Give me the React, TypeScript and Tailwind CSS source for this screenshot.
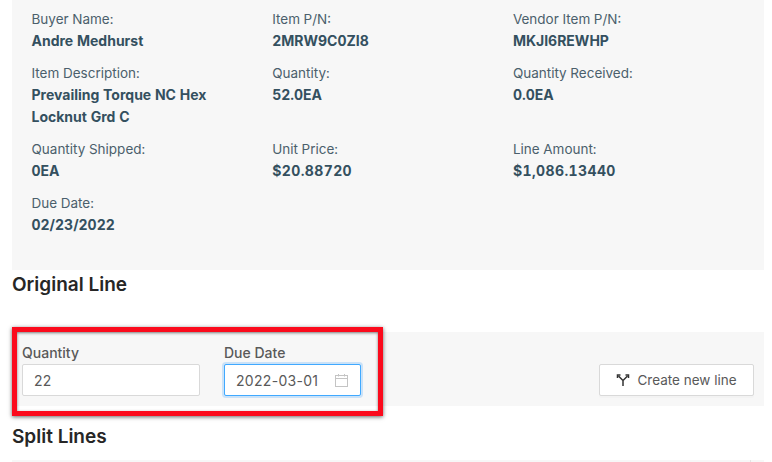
const items: [string, string[]][][] = [
  [["Buyer Name:", ["Andre Medhurst"]], ["Item P/N:", ["2MRW9C0ZI8"]], ["Vendor Item P/N:", ["MKJI6REWHP"]]],
  [["Item Description:", ["Prevailing Torque NC Hex", "Locknut Grd C"]], ["Quantity:", ["52.0EA"]], ["Quantity Received:", ["0.0EA"]]],
  [["Quantity Shipped:", ["0EA"]], ["Unit Price:", ["$20.88720"]], ["Line Amount:", ["$1,086.13440"]]],
  [["Due Date:", ["02/23/2022"]]],
];

export default function App() {
  return (
    <div className="relative h-[462px] w-[772px] overflow-hidden bg-white font-['Inter',sans-serif]">
      <div className="ml-3 mr-2 h-[270px] bg-[#f7f7f7] pl-[19.5px] pt-[8px] tabular-nums">
        <div className="flex flex-col gap-[10px]">
          {items.map((row, i) => (
            <div key={i} className="grid grid-cols-[240.7px_240.7px_240.7px]">
              {row.map(([label, values]) => (
                <div key={label} className="leading-[22px]">
                  <div className="text-[13.5px] text-[#4b5f6c]">{label}</div>
                  {values.map((v) => (
                    <div
                      key={v}
                      className={v.startsWith("$") ? "text-[14px] font-bold tracking-[0.4px] text-[#34505f]" : "text-[14px] font-bold text-[#34505f]"}
                    >
                      {v}
                    </div>
                  ))}
                </div>
              ))}
            </div>
          ))}
        </div>
      </div>
      <h2 className="ml-3 mr-2 mt-[3px] text-[19px] font-semibold leading-[24px] text-[#262626]">Original Line</h2>
      <div className="ml-3 mr-2 mt-[35px] flex h-[74px] items-start bg-[#f7f7f7] pl-[10px] pt-[12px]">
        <div className="w-[178px]">
          <div className="text-[14px] font-medium leading-[18px] text-[#595959]">Quantity</div>
          <div className="mt-[2px] flex h-[32px] items-center rounded-[2px] border border-[#d9d9d9] bg-white pl-[11px] text-[14px] tracking-[0.3px] text-[#595959]">22</div>
        </div>
        <div className="ml-6 w-[137px]">
          <div className="text-[14px] font-medium leading-[18px] text-[#595959]">Due Date</div>
          <div className="mt-[2px] flex h-[32px] items-center justify-between rounded-[2px] border border-[#40a9ff] bg-white pl-[11px] pr-[12px] text-[14px] tracking-[0.3px] text-[#595959] shadow-[0_0_0_2px_rgba(24,144,255,0.2)]">
            <span>2022-03-01</span>
            <svg width="13" height="13" viewBox="0 0 13 13" fill="none" stroke="#c4c4c4" strokeWidth="1">
              <rect x="0.5" y="1.5" width="12" height="11" />
              <path d="M0.5 4.5H12.5M3.5 0V2.5M9.5 0V2.5" />
            </svg>
          </div>
        </div>
        <button className="ml-auto mr-[10px] mt-[20px] flex h-[32px] w-[155px] items-center justify-center gap-[7px] rounded-[2px] border border-[#d9d9d9] bg-white text-[13.5px] text-[#595959] shadow-[0_2px_0_rgba(0,0,0,0.015)]">
          <svg width="14" height="14" viewBox="0 0 14 14" fill="none" stroke="#333333" strokeWidth="1.5">
            <path d="M7 13V7.5L2.5 3M7 7.5L11.5 3" />
            <path d="M1.5 5V2H4.5M9.5 2H12.5V5" />
          </svg>
          Create new line
        </button>
      </div>
      <h2 className="ml-3 mr-2 mt-[19px] text-[19px] font-semibold leading-[24px] text-[#262626]">Split Lines</h2>
      <div className="ml-3 mr-2 mt-[11px] flex h-[10px] justify-end bg-[#f7f7f7] pr-[13px]">
        <div className="w-px bg-[#e4e4e4]" />
      </div>
      <div className="absolute left-[12px] top-[327px] h-[89px] w-[371px] border-[5px] border-[#fb0a1c] shadow-[0_1px_4px_rgba(0,0,0,0.6),inset_0_1px_3px_rgba(0,0,0,0.5)]" />
    </div>
  );
}
